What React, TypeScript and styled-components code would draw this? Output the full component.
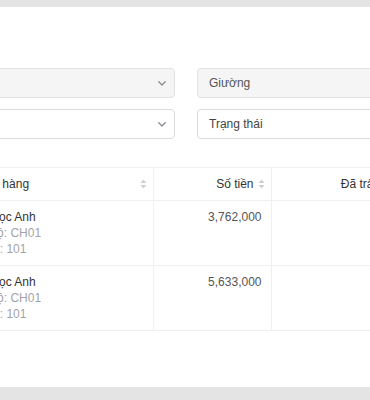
import React from "react";
import styled, { createGlobalStyle } from "styled-components";

const Global = createGlobalStyle`
  html, body { margin: 0; padding: 0; background: #e4e4e4; overflow: hidden; }
  body { font-family: "Liberation Sans", Arial, Helvetica, sans-serif; font-size: 12px; color: #333; }
`;

const Page = styled.div`
  width: 370px;
  height: 400px;
  padding-top: 7px;
  box-sizing: border-box;
  overflow: hidden;
`;

const Card = styled.div`
  background: #fff;
  height: 380px;
  padding-top: 61px;
  box-sizing: border-box;
  overflow: hidden;
`;

const Content = styled.div`
  margin-left: -43px;
  width: 480px;
`;

const FormGrid = styled.div`
  display: grid;
  grid-template-columns: 218px 218px;
  column-gap: 22px;
  row-gap: 11px;
`;

const Field = styled.div<{ $disabled?: boolean }>`
  height: 30px;
  box-sizing: border-box;
  border: 1px solid ${(p) => (p.$disabled ? "#e2e2e4" : "#dcdce0")};
  background: ${(p) => (p.$disabled ? "#f5f5f5" : "#fff")};
  border-radius: 4px;
  display: flex;
  align-items: center;
  padding: 0 8px 0 11px;
  font-size: 12px;
  color: ${(p) => (p.$disabled ? "#555" : "#444")};
`;

const FieldText = styled.span`
  flex: 1;
  white-space: nowrap;
`;

const Chevron = styled.svg`
  width: 8px;
  height: 5px;
  flex: none;
`;

const Table = styled.table`
  margin-top: 28px;
  border-collapse: collapse;
  table-layout: fixed;
  width: 434px;
  font-size: 12px;
  line-height: 16px;
  border-top: 1px solid #efeff2;
`;

const Th = styled.th<{ $align?: "left" | "right" }>`
  font-weight: normal;
  color: #333;
  text-align: ${(p) => p.$align || "left"};
  padding: 8px 6px 8px 8px;
  border-bottom: 1px solid #efeff2;
  border-right: 1px solid #efeff2;
  background: #fff;
  white-space: nowrap;
`;

const HeadInner = styled.div<{ $align?: "left" | "right" }>`
  display: flex;
  align-items: center;
  justify-content: ${(p) => (p.$align === "right" ? "flex-end" : "space-between")};
  gap: 4px;
`;

const Td = styled.td<{ $align?: "left" | "right" }>`
  vertical-align: top;
  text-align: ${(p) => p.$align || "left"};
  padding: 8px 9px 8px 8px;
  border-bottom: 1px solid #efeff2;
  border-right: 1px solid #efeff2;
  white-space: nowrap;
`;

const Name = styled.div`
  color: #333;
`;

const Meta = styled.div`
  color: #a3a3a8;
`;

const Amount = styled.div`
  color: #555;
`;

const SortIcon = () => (
  <svg width="7" height="10" viewBox="0 0 7 10" style={{ flex: "none" }}>
    <path d="M3.5 0.5 L6.5 4 H0.5 Z" fill="#cfcfd3" />
    <path d="M3.5 9.5 L6.5 6 H0.5 Z" fill="#cfcfd3" />
  </svg>
);

const ChevronDown = () => (
  <Chevron viewBox="0 0 8 5">
    <path d="M0.8 0.8 L4 4 L7.2 0.8" fill="none" stroke="#8a8a90" strokeWidth="1.3" strokeLinecap="round" strokeLinejoin="round" />
  </Chevron>
);

const rows = [
  { name: "Đỗ Ngọc Anh", unit: "CH01", room: "101", amount: "3,762,000", paid: "0" },
  { name: "Đỗ Ngọc Anh", unit: "CH01", room: "101", amount: "5,633,000", paid: "0" },
];

export default function App() {
  return (
    <>
      <Global />
      <Page>
        <Card>
          <Content>
            <FormGrid>
              <Field $disabled>
                <FieldText>CH01</FieldText>
                <ChevronDown />
              </Field>
              <Field $disabled>
                <FieldText>Giường</FieldText>
              </Field>
              <Field>
                <FieldText>2024</FieldText>
                <ChevronDown />
              </Field>
              <Field>
                <FieldText>Trạng thái</FieldText>
              </Field>
            </FormGrid>
            <Table>
              <colgroup>
                <col style={{ width: 196 }} />
                <col style={{ width: 118 }} />
                <col style={{ width: 120 }} />
              </colgroup>
              <thead>
                <tr>
                  <Th>
                    <HeadInner>
                      <span>Khách hàng</span>
                      <SortIcon />
                    </HeadInner>
                  </Th>
                  <Th $align="right">
                    <HeadInner $align="right">
                      <span>Số tiền</span>
                      <SortIcon />
                    </HeadInner>
                  </Th>
                  <Th $align="right">
                    <HeadInner $align="right">
                      <span>Đã trả</span>
                      <SortIcon />
                    </HeadInner>
                  </Th>
                </tr>
              </thead>
              <tbody>
                {rows.map((r, i) => (
                  <tr key={i}>
                    <Td>
                      <Name>{r.name}</Name>
                      <Meta>Căn hộ: {r.unit}</Meta>
                      <Meta>Phòng: {r.room}</Meta>
                    </Td>
                    <Td $align="right">
                      <Amount>{r.amount}</Amount>
                    </Td>
                    <Td $align="right">
                      <Amount>{r.paid}</Amount>
                    </Td>
                  </tr>
                ))}
              </tbody>
            </Table>
          </Content>
        </Card>
      </Page>
    </>
  );
}
